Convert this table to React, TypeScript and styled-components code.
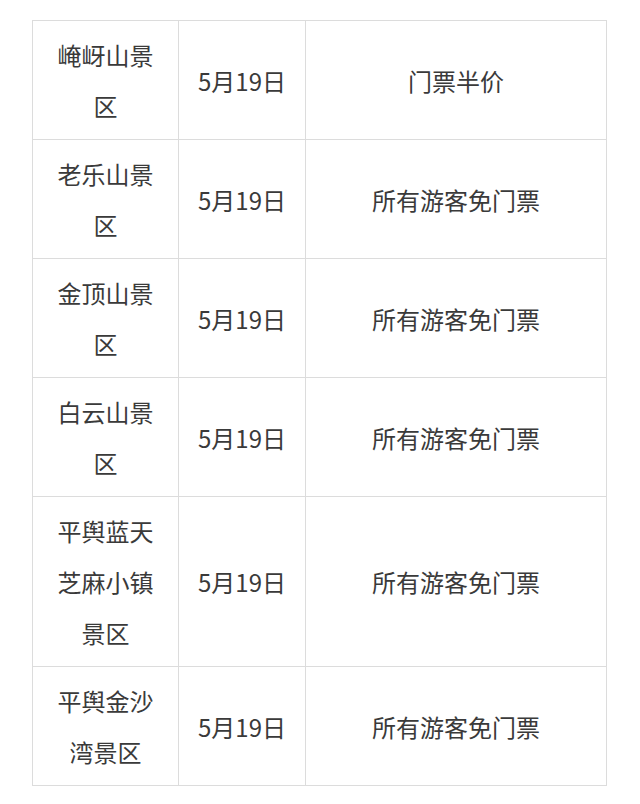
import * as React from 'react'
import styled, { createGlobalStyle } from 'styled-components'

const GlobalStyle = createGlobalStyle`
  html, body {
    margin: 0;
    background: #fff;
  }
  body {
    font-family: "Noto Sans CJK SC", "Noto Sans", sans-serif;
    color: #3a3a3a;
  }
`

const Page = styled.div`
  padding: 20px 33px 18px 32px;
`

const Table = styled.table`
  width: 575px;
  border-collapse: collapse;
  table-layout: fixed;
  font-size: 24px;
  line-height: 51px;
`

const Cell = styled.td<{ $narrow?: boolean }>`
  border: 1px solid #dcdcdc;
  padding: ${(p) => (p.$narrow ? '8px 22px' : '8px 10px')};
  text-align: center;
  vertical-align: middle;
  word-break: break-all;
`

const rows = [
  { name: '崦岈山景区', date: '5月19日', offer: '门票半价' },
  { name: '老乐山景区', date: '5月19日', offer: '所有游客免门票' },
  { name: '金顶山景区', date: '5月19日', offer: '所有游客免门票' },
  { name: '白云山景区', date: '5月19日', offer: '所有游客免门票' },
  { name: '平舆蓝天芝麻小镇景区', date: '5月19日', offer: '所有游客免门票' },
  { name: '平舆金沙湾景区', date: '5月19日', offer: '所有游客免门票' },
]

export default function App() {
  return (
    <Page>
      <GlobalStyle />
      <Table>
        <colgroup>
          <col style={{ width: 146 }} />
          <col style={{ width: 127 }} />
          <col />
        </colgroup>
        <tbody>
          {rows.map((r) => (
            <tr key={r.name}>
              <Cell $narrow>{r.name}</Cell>
              <Cell>{r.date}</Cell>
              <Cell>{r.offer}</Cell>
            </tr>
          ))}
        </tbody>
      </Table>
    </Page>
  )
}
